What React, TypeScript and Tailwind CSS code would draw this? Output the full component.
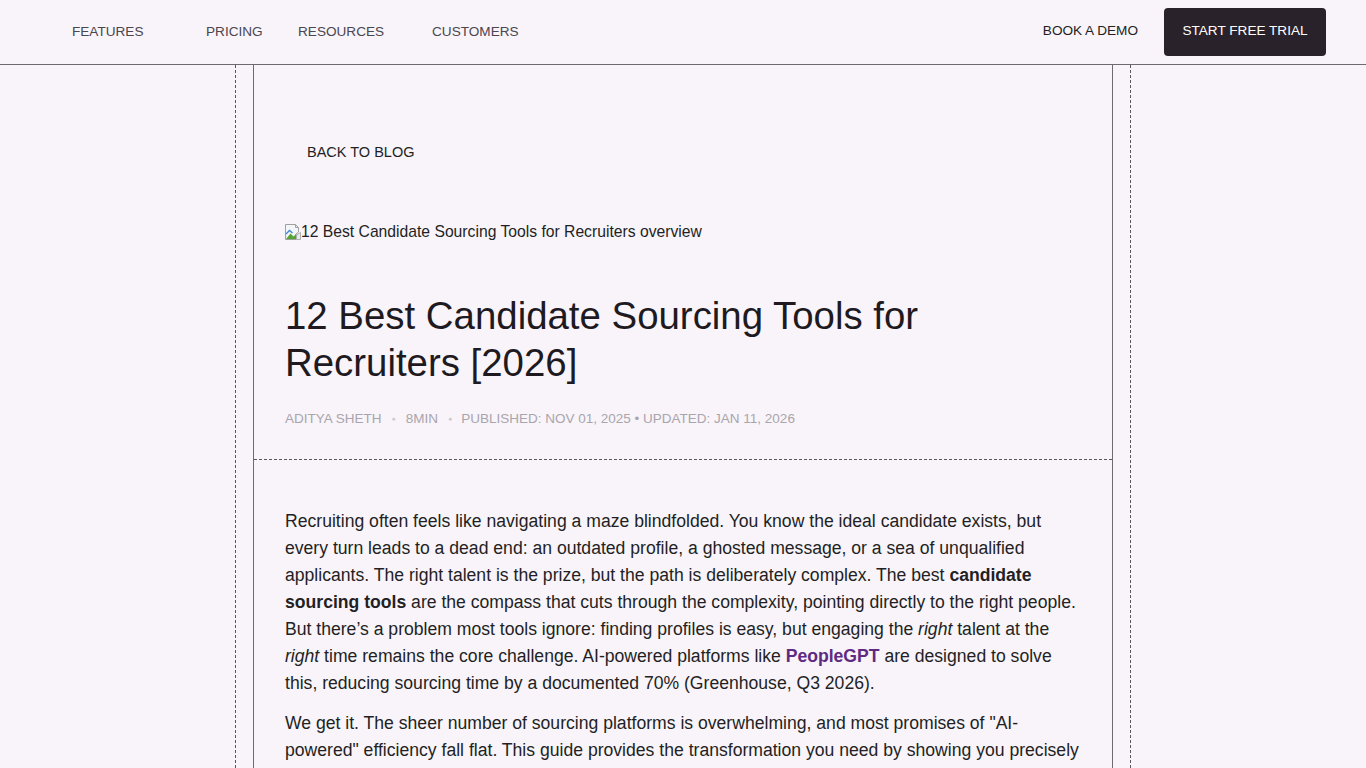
import React from "react";

function BrokenImage() {
  return (
    <svg width="16" height="18" viewBox="0 0 16 18" className="shrink-0">
      <path d="M0.5 1.5h10l3 3v4.5l-2.5 2v5.5h-10.5z" fill="#f3f6f9" stroke="#a0a0a0" strokeWidth="1" />
      <path d="M10.5 1.5v3h3" fill="none" stroke="#a0a0a0" strokeWidth="1" />
      <path d="M1 16l4.5-5.5 3 3 2.5-2.5v5z" fill="#58a336" />
      <path d="M1 11l3.5-3.5 3 2.5" fill="none" stroke="#3f86d1" strokeWidth="1.3" />
      <path d="M11.5 12l4-2.5v7h-4z" fill="#e6ebf0" stroke="#a0a0a0" strokeWidth="0.8" />
    </svg>
  );
}

export default function App() {
  const font = { fontFamily: '"Liberation Sans", Arial, sans-serif' };
  return (
    <div className="min-h-screen bg-[#f8f4f9] text-[#231f24]" style={font}>
      <header className="h-[65px] border-b border-[#6e6a70] flex items-center">
        <nav className="flex items-center pl-[72px] pt-[1px] text-[13.6px] text-[#4b4650]">
          <a className="w-[134px]">FEATURES</a>
          <a className="w-[92px]">PRICING</a>
          <a className="w-[134px]">RESOURCES</a>
          <a>CUSTOMERS</a>
        </nav>
        <div className="ml-auto flex items-center pr-[40px]">
          <a className="text-[13.6px] text-[#231f24] mr-[26px] -mt-[2px]">BOOK A DEMO</a>
          <button className="h-[48px] w-[162px] rounded-[4px] bg-[#2a222a] text-white text-[13.6px] -mt-[1px]">
            START FREE TRIAL
          </button>
        </div>
      </header>

      <div className="mx-auto w-[896px] border-x border-dashed border-[#5a565c] px-[17px]">
        <div className="border-x border-[#6e6a70] min-h-[720px]">
          <section className="border-b border-dashed border-[#5a565c] pl-[31px] pr-[32px] pt-[77px] pb-[30px]">
            <a className="block pl-[22px] text-[14.5px] leading-[20px] text-[#231f24]">BACK TO BLOG</a>
            <div className="mt-[61px] flex items-center h-[18px] text-[15.7px] leading-[18px] text-[#231f24]">
              <BrokenImage />
              <span>12 Best Candidate Sourcing Tools for Recruiters overview</span>
            </div>
            <h1 className="mt-[51px] text-[38.4px] leading-[47px] text-[#1e1a1f] max-w-[700px]">
              12 Best Candidate Sourcing Tools for Recruiters [2026]
            </h1>
            <div className="mt-[23px] flex items-center text-[13.5px] leading-[20px] text-[#aaa5ad]">
              <span>ADITYA SHETH</span>
              <span className="mx-[10px] text-[7px] text-[#cfcad1]">●</span>
              <span>8MIN</span>
              <span className="ml-[10px] mr-[9px] text-[7px] text-[#cfcad1]">●</span>
              <span>PUBLISHED: NOV 01, 2025 • UPDATED: JAN 11, 2026</span>
            </div>
          </section>
          <article className="pl-[31px] pr-[32px] pt-[48px] text-[17.6px] leading-[27px] text-[#231f24]">
            <p>
              Recruiting often feels like navigating a maze blindfolded. You know the ideal candidate exists, but
              every turn leads to a dead end: an outdated profile, a ghosted message, or a sea of unqualified
              applicants. The right talent is the prize, but the path is deliberately complex. The best{" "}
              <strong>candidate sourcing tools</strong> are the compass that cuts through the complexity, pointing
              directly to the right people. But there’s a problem most tools ignore: finding profiles is easy, but
              engaging the <em>right</em> talent at the <em>right</em> time remains the core challenge. AI-powered
              platforms like <strong className="text-[#5f2b82]">PeopleGPT</strong> are designed to solve this,
              reducing sourcing time by a documented 70% (Greenhouse, Q3 2026).
            </p>
            <p className="mt-[13px]">
              We get it. The sheer number of sourcing platforms is overwhelming, and most promises of "AI-powered"
              efficiency fall flat. This guide provides the transformation you need by showing you precisely
              which tools deliver real results, how they compare on features and pricing, and where each one fits in
              a modern recruiting workflow.
            </p>
          </article>
        </div>
      </div>
    </div>
  );
}
